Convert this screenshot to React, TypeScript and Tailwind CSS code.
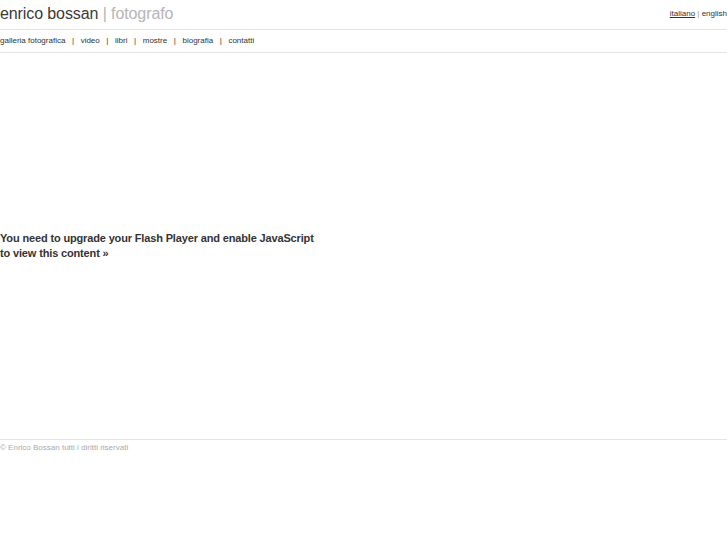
export default function App() {
  const nav = ["galleria fotografica", "video", "libri", "mostre", "biografia", "contatti"];
  return (
    <div className="min-h-screen bg-white text-[#333] [font-family:'Liberation_Sans',Arial,sans-serif]">
      {/* header */}
      <div className="flex h-[30px] items-start justify-between border-b border-[#e3e3e3]">
        <h1 className="pt-[4px] text-[16px] leading-[19px] font-normal tracking-[-0.1px] text-[#3a3a3a]">
          enrico bossan <span className="text-[#b5b5b5]">| fotografo</span>
        </h1>
        <div className="pt-[9px] text-[8px] leading-[10px]">
          <a className="underline">italiano</a> <span className="text-[#999]">|</span> <a>english</a>
        </div>
      </div>

      {/* nav */}
      <div className="flex h-[23px] items-center border-b border-[#e3e3e3] text-[8px]">
        {nav.map((item, i) => (
          <span key={item} className="flex items-center">
            {i > 0 && <span className="px-[6.6px]">|</span>}
            <a>{item}</a>
          </span>
        ))}
      </div>

      {/* flash content */}
      <div className="h-[386px] pt-[178px]">
        <p className="text-[11px] leading-[15px] font-bold tracking-[-0.15px]">
          You need to upgrade your Flash Player and enable JavaScript
          <br />
          to view this content »
        </p>
      </div>

      {/* footer */}
      <div className="border-t border-[#e3e3e3] pt-[2px] text-[8px] text-[#aaa]">
        © Enrico Bossan tutti i diritti riservati
      </div>
    </div>
  );
}
